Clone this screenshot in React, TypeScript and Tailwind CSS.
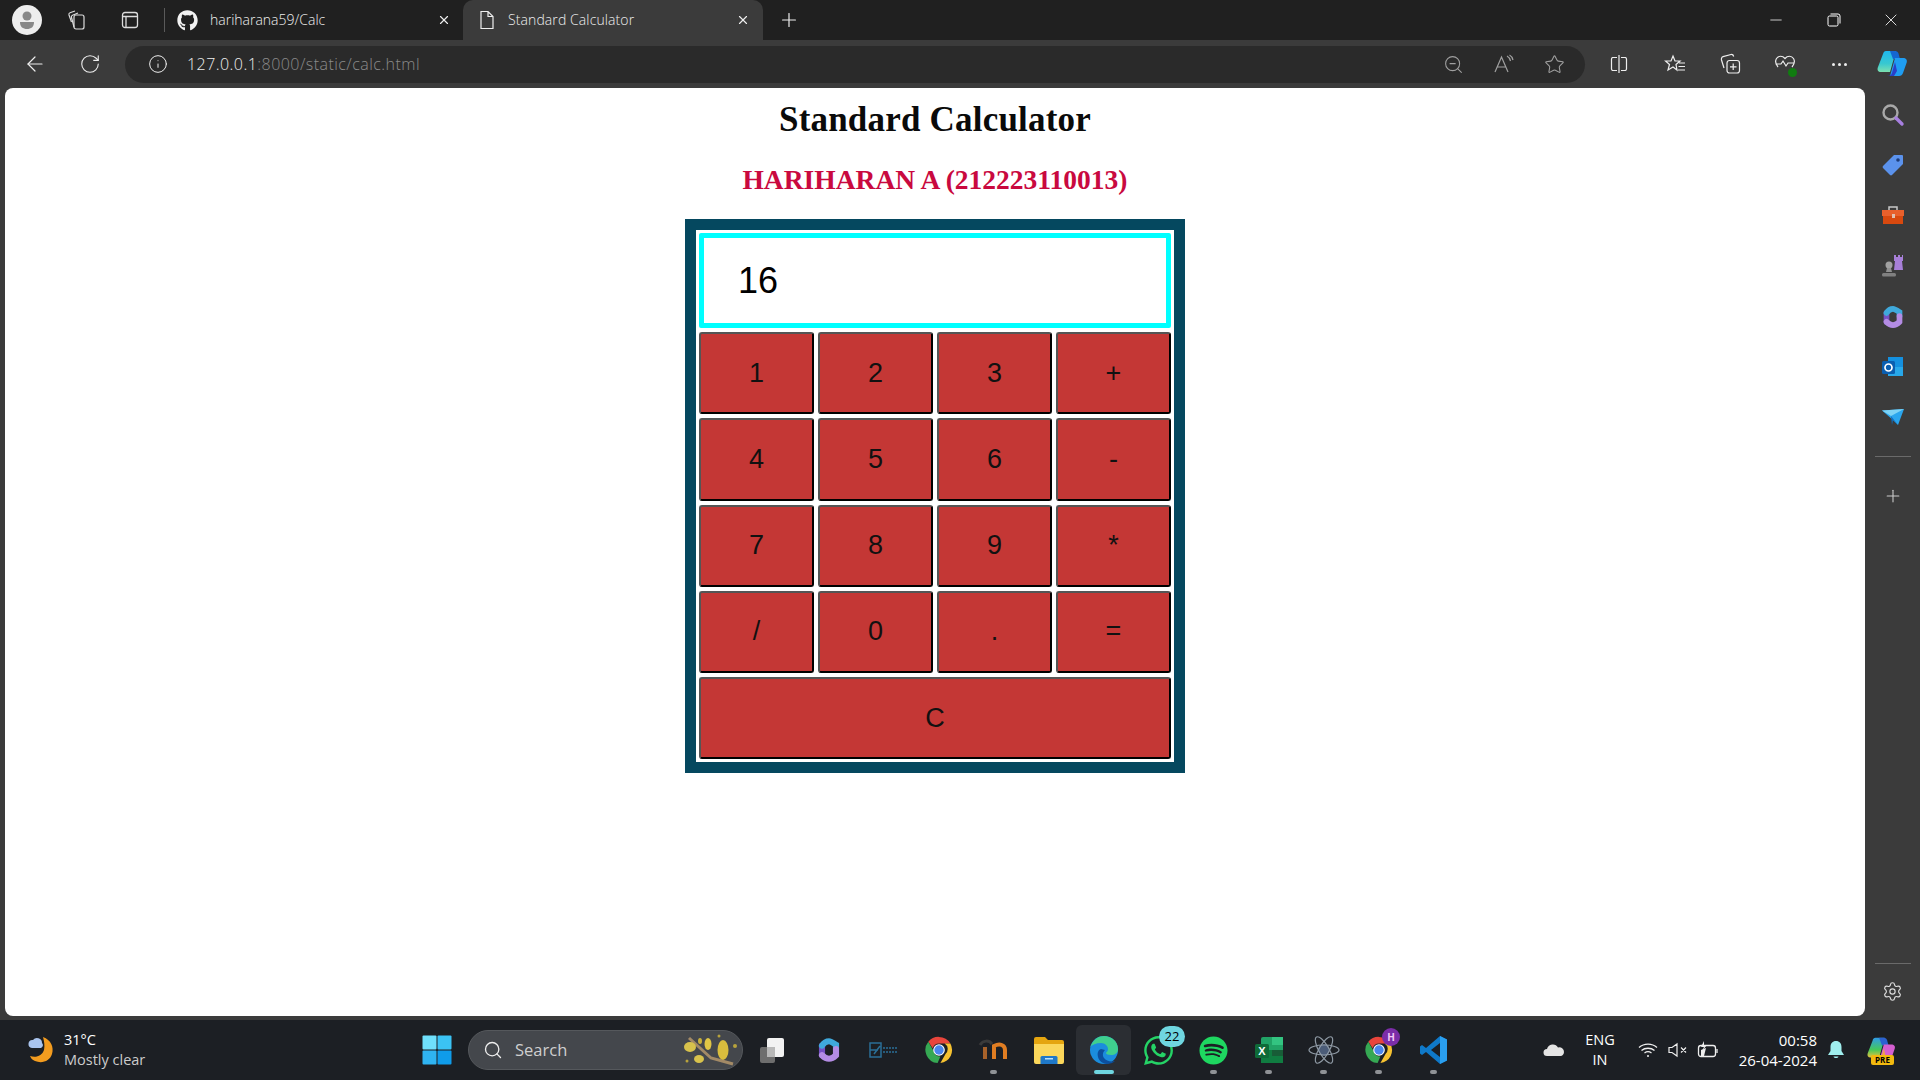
import {
  ArrowLeft,
  Info,
  Minus,
  Plus,
  RotateCw,
  Search,
  Settings,
  Star,
  X,
  ZoomOut,
} from "lucide-react";
import { FaGithub, FaSpotify, FaWhatsapp } from "react-icons/fa";

const keys = ["1", "2", "3", "+", "4", "5", "6", "-", "7", "8", "9", "*", "/", "0", ".", "="];

const keyClass =
  "h-[82.25px] rounded-[3px] border-2 border-t-[#555555] border-l-[#555555] border-r-black border-b-black bg-[#c43735] text-[27px] leading-none text-[#111111] font-['Liberation_Sans',sans-serif]";

function ChromeLogo({ size = 30 }: { size?: number }) {
  return (
    <svg width={size} height={size} viewBox="0 0 32 32">
      <path d="M16 2a14 14 0 0 1 12.1 7H16a7 7 0 0 0-6.7 5L4.6 7.2A14 14 0 0 1 16 2z" fill="#e8453c" />
      <path d="M28.1 9A14 14 0 0 1 17.5 29.9l5.6-9.9A7 7 0 0 0 22 9z" fill="#f6c231" />
      <path d="M4.6 7.2 10.500 17.500A7 7 0 0 0 17.500 22.800L14.500 29.900A14 14 0 0 1 4.600 7.200z" fill="#35a853" />
      <circle cx="16" cy="16" r="6.200" fill="#fff" />
      <circle cx="16" cy="16" r="5" fill="#4a87ee" />
    </svg>
  );
}

function CopilotLogo({ size = 30, pink = false }: { size?: number; pink?: boolean }) {
  const id = pink ? "copilot-pink" : "copilot-blue";
  return (
    <svg width={size} height={size} viewBox="0 0 32 32">
      <defs>
        <linearGradient id={id} x1="0" y1="0" x2="0" y2="1">
          <stop offset="0" stopColor={pink ? "#2f9be8" : "#1fb8ee"} />
          <stop offset="0.6" stopColor={pink ? "#45c85a" : "#38c8d0"} />
          <stop offset="1" stopColor={pink ? "#e8c23c" : "#7ce0b0"} />
        </linearGradient>
      </defs>
      <path d="M10 3h10l-6 21H5c-3 0-4-2-3.200-4.500L7 6c.5-2 1.500-3 3-3z" fill={`url(#${id})`} />
      <path d="M14 3h5c2 0 3 1 3.500 2.500L24 11h-7z" fill={pink ? "#2c62d0" : "#1566d0"} />
      <path d="M19 10h8c3 0 4.500 2 3.700 4.500L27 25c-.7 2-2 3-4 3h-9l5-18z" fill={pink ? "#d55fd0" : "#1f9df2"} />
      <path d="M11 28c3 0 4.500-1 5-3l3-11 2 9-3 5z" fill={pink ? "#f0a050" : "#2a3fc8"} />
    </svg>
  );
}

function M365Logo({ size = 28 }: { size?: number }) {
  return (
    <svg width={size} height={size} viewBox="0 0 32 32" fill="none" strokeWidth="7" strokeLinecap="round">
      <path d="M8 22V11" stroke="#7650c4" />
      <path d="M8 11c2-3 5-5 8-5 2 0 5 2 8 4v5" stroke="#3fa9dc" />
      <path d="M24 15v7c-2 2-5 4-8 4-3 0-6-2-8-4" stroke="#b48ce4" />
    </svg>
  );
}

function EdgeLogo() {
  return (
    <svg width="32" height="32" viewBox="0 0 32 32">
      <circle cx="16" cy="16" r="14" fill="#1b8ddd" />
      <path d="M2.500 13C5 5 11 2 16 2c7 0 14 5 14 13 0 4-3 6-7 6-3 0-5-1-5-2 0-1 2-1 2-4 0-3-3-6-7-6-5 0-9 2-11 4z" fill="#3fcf8e" />
      <path d="M13 15c-3 1-4 4-3 8 1 4 5 7 9 7 3 0 6-1 8-3-4 1-9 0-11-3-2-3-1-6 1-8z" fill="#0c4f9e" />
    </svg>
  );
}

function Slot({ children, dot, active }: { children: React.ReactNode; dot?: boolean; active?: boolean }) {
  return (
    <div className={`relative flex h-[50px] w-[55px] items-center justify-center rounded-md ${active ? "bg-[#2b2e33]" : ""}`}>
      {children}
      {dot && <span className="absolute bottom-[1px] h-[4px] w-[7px] rounded-full bg-[#8f9296]" />}
      {active && <span className="absolute bottom-[1px] h-[4px] w-[20px] rounded-full bg-[#6fd6e0]" />}
    </div>
  );
}

function TopBar() {
  return (
    <div className="flex h-10 items-center bg-[#202020] text-white font-['Open_Sans',sans-serif]">
      <div className="ml-[12px] flex h-[30px] w-[30px] items-center justify-center overflow-hidden rounded-full bg-[#eeeeee]">
        <svg width="20" height="24" viewBox="0 0 20 24">
          <circle cx="10" cy="8" r="4.500" fill="#888" />
          <path d="M3 14h14c0 5-3 7-7 7s-7-2-7-7z" fill="#888" />
        </svg>
      </div>
      <svg className="ml-[24px]" width="22" height="22" viewBox="0 0 22 22" fill="none" stroke="#dddddd" strokeWidth="1.200">
        <rect x="8" y="6" width="10" height="14" rx="2" />
        <path d="M8 18 5.500 8.500c-.3-1 .2-2 1-2.300L12 4" />
        <path d="M5.500 13 3 6c-.3-1 .2-2 1-2.300L9 2" />
      </svg>
      <svg className="ml-[32px]" width="20" height="20" viewBox="0 0 20 20" fill="none" stroke="#dddddd" strokeWidth="1.300">
        <rect x="2.500" y="2.500" width="15" height="15" rx="2.500" />
        <path d="M2.500 6.500h15M6 6.500v11" />
      </svg>
      <div className="ml-[24px] h-6 w-px bg-[#5a5a5a]" />
      <FaGithub className="ml-[12px] shrink-0 text-[#f2f2f2]" size={21} />
      <span className="ml-[12px] w-[227px] pb-[2px] text-[14px] font-light text-[#eeeeee]">hariharana59/Calc</span>
      <X size={14} className="text-[#eeeeee]" />
      <div className="ml-[12px] flex h-10 w-[300px] items-center rounded-t-[10px] bg-[#3b3b3b]">
        <svg className="ml-[15px]" width="18" height="20" viewBox="0 0 18 20" fill="none" stroke="#eeeeee" strokeWidth="1.200">
          <path d="M3 1.500h7l5 5v12H3zM10 1.500v5h5" />
        </svg>
        <span className="ml-[12px] w-[228px] pb-[2px] text-[14px] font-light tracking-[0.1px] text-[#eeeeee]">Standard Calculator</span>
        <X size={14} className="text-[#eeeeee]" />
      </div>
      <Plus size={22} strokeWidth={1.300} className="ml-[15px] text-[#eeeeee]" />
      <div className="ml-auto flex items-center">
        <Minus size={18} strokeWidth={1} className="mr-[42px]" />
        <svg className="mr-[40px]" width="14" height="14" viewBox="0 0 14 14" fill="none" stroke="#ffffff" strokeWidth="1">
          <rect x="1" y="3" width="10" height="10" rx="1.500" />
          <path d="M3.500 1h7.500a2 2 0 0 1 2 2v7.500" />
        </svg>
        <X size={20} strokeWidth={1} className="mr-[19px]" />
      </div>
    </div>
  );
}

function Toolbar() {
  return (
    <div className="flex h-12 items-center bg-[#3b3b3b] text-[#eeeeee]">
      <ArrowLeft size={24} strokeWidth={1.200} className="ml-[23px]" />
      <RotateCw size={22} strokeWidth={1.200} className="ml-[32px]" />
      <div className="ml-[24px] flex h-[37px] w-[1460px] items-center rounded-full bg-[#2a2a2a]">
        <Info size={20} strokeWidth={1.200} className="ml-[23px]" />
        <span className="ml-[19px] text-[16px] font-light tracking-[0.45px] font-['Open_Sans',sans-serif]">
          127.0.0.1<span className="text-[#8a8a8a]">:8000/static/calc.html</span>
        </span>
        <ZoomOut size={21} strokeWidth={1.200} className="ml-auto text-[#a0a0a0]" />
        <svg className="ml-[30px]" width="20" height="20" viewBox="0 0 20 20" fill="none" stroke="#a0a0a0" strokeWidth="1.200">
          <path d="M1 18 7.500 3l6.500 15M3.500 13h8M13 2c2 1 3 3 3.500 5M15.500 1c2 1 3 3 3.500 5" />
        </svg>
        <Star size={21} strokeWidth={1.200} className="ml-[30px] mr-[20px] text-[#a0a0a0]" />
      </div>
      <svg className="ml-[24px]" width="20" height="20" viewBox="0 0 20 20" fill="none" stroke="#eeeeee" strokeWidth="1.200">
        <path d="M8 3.500H3.500a2 2 0 0 0-1 1.500v10a2 2 0 0 0 1 1.500H8M12 3.500h4.500a2 2 0 0 1 1 1.500v10a2 2 0 0 1-1 1.500H12M10 1v18" />
      </svg>
      <svg className="ml-[35px]" width="22" height="22" viewBox="0 0 22 22" fill="none" stroke="#eeeeee" strokeWidth="1.200">
        <path d="m9 3 2 5h5l-4 3.500 1 5.500-4-3-5 3 1.500-5.500L1.500 8h5.500zM15 10h6M14.500 13.500H21M14 17h7" />
      </svg>
      <svg className="ml-[33px]" width="22" height="22" viewBox="0 0 22 22" fill="none" stroke="#eeeeee" strokeWidth="1.200">
        <path d="M5 15 2.500 7c-.4-1.500.3-3 1.500-3.300L12 1.500c1.200-.2 2.300.5 2.700 2" />
        <rect x="8" y="7.500" width="12.500" height="12.500" rx="2.500" />
        <path d="M14.200 10.500v6.500M11 13.800h6.500" />
      </svg>
      <div className="relative ml-[33px] h-[22px] w-[22px]">
        <svg width="22" height="22" viewBox="0 0 22 22" fill="none" stroke="#eeeeee" strokeWidth="1.200">
          <path d="M4 14C1.500 11 1 8 2.500 5.500 4.500 2.500 8.500 2.500 11 5.500c2.500-3 6.500-3 8.500 0 1.500 2.500 1 5.500-1.500 8.500M1.500 11H7l2-3 3 5 2-3h6.500" />
        </svg>
        <span className="absolute right-[-1px] bottom-[-2px] h-[9px] w-[9px] rounded-full bg-[#107c10]" />
      </div>
      <div className="ml-[36px] flex gap-[3px]">
        <span className="h-[3px] w-[3px] rounded-full bg-[#eeeeee]" />
        <span className="h-[3px] w-[3px] rounded-full bg-[#eeeeee]" />
        <span className="h-[3px] w-[3px] rounded-full bg-[#eeeeee]" />
      </div>
      <div className="ml-[29px]">
        <CopilotLogo size={32} />
      </div>
    </div>
  );
}

function Calculator() {
  return (
    <div className="mt-[23px] w-[500px] border-[11px] border-[#05485f] bg-white p-[3px]">
      <input
        readOnly
        value="16"
        className="mb-[4px] block h-[95px] w-full rounded-[2px] border-[5px] border-[#00ffff] bg-white px-[34px] text-[36px] text-black outline-none font-['Liberation_Sans',sans-serif]"
      />
      <div className="grid grid-cols-4 gap-x-[4px] gap-y-[4px]">
        {keys.map((key) => (
          <button key={key} className={keyClass}>
            {key}
          </button>
        ))}
        <button className={`${keyClass} col-span-4`}>C</button>
      </div>
    </div>
  );
}

function Sidebar() {
  return (
    <div className="flex w-[55px] flex-col items-center bg-[#3b3b3b] pt-[14px]">
      <div className="flex flex-col items-center gap-[24.4px]">
        <svg width="26" height="26" viewBox="0 0 26 26" fill="none">
          <circle cx="10.500" cy="10.500" r="7" stroke="#a8a8a8" strokeWidth="2.400" />
          <path d="m16 16 6 6" stroke="#a77fe0" strokeWidth="3.400" strokeLinecap="round" />
        </svg>
        <svg width="26" height="26" viewBox="0 0 26 26">
          <path d="M14 3h8a1 1 0 0 1 1 1v8L12 23a1.500 1.500 0 0 1-2 0l-7-7a1.500 1.500 0 0 1 0-2z" fill="#5b92ec" />
          <circle cx="18" cy="8" r="1.800" fill="#1d3c78" />
        </svg>
        <svg width="26" height="26" viewBox="0 0 26 26">
          <path d="M9 7V4h8v3" fill="none" stroke="#c8c8c8" strokeWidth="1.500" />
          <rect x="2" y="7" width="22" height="6" fill="#e8602c" />
          <rect x="3" y="13" width="20" height="8" fill="#d8490f" />
          <rect x="12" y="11" width="3" height="4" fill="#e0c0b0" />
        </svg>
        <svg width="26" height="26" viewBox="0 0 26 26">
          <circle cx="9" cy="12" r="3.500" fill="#a0a0a0" />
          <path d="M7 15h4l1 4H6z" fill="#909090" />
          <rect x="2" y="20" width="14" height="3.500" rx="1.500" fill="#808080" />
          <path d="M14 2h2v2h2V2h2v2h2V2h1v6h-1l1 9h-9l1-9h-1z" fill="#a77fd8" />
        </svg>
        <M365Logo size={26} />
        <svg width="26" height="26" viewBox="0 0 26 26">
          <path d="M8 3h15v18H8z" fill="#1490df" />
          <path d="M8 13h15v9H8z" fill="#28a8ea" />
          <rect x="2" y="7" width="13" height="13" rx="1.500" fill="#0a5eb0" />
          <circle cx="8.500" cy="13.500" r="3.500" fill="none" stroke="#fff" strokeWidth="1.700" />
        </svg>
        <svg width="26" height="26" viewBox="0 0 26 26">
          <path d="M2 6.500 24 5 18 21l-5-5z" fill="#2aa6ee" />
          <path d="M2 6.500 24 5l-13 7z" fill="#7dd3f5" />
          <path d="m11 12 7 9-5-5-1 5z" fill="#0f6cbd" />
        </svg>
      </div>
      <div className="mt-[26px] h-px w-[36px] bg-[#6a6a6a]" />
      <Plus size={20} strokeWidth={1.300} className="mt-[29px] text-[#cccccc]" />
      <div className="mt-auto h-px w-[36px] bg-[#6a6a6a]" />
      <Settings size={21} strokeWidth={1.300} className="mb-[18px] mt-[17px] text-[#dddddd]" />
    </div>
  );
}

function Taskbar() {
  return (
    <div className="flex h-[60px] items-center bg-[#1c1f24] text-white font-['Open_Sans',sans-serif]">
      <svg className="ml-[24px]" width="32" height="32" viewBox="0 0 32 32">
        <path d="M19 3c8 3 11 10 9 17-2 7-10 10-17 7-3-1-4-3-5-5 6 2 12 0 14-6 1-5 0-9-1-13z" fill="#f39c1f" />
        <path d="M8 14a4 4 0 0 1 1-8 5 5 0 0 1 9 3 3 3 0 0 1-1 5z" fill="#a9c4ee" />
      </svg>
      <div className="ml-[8px] flex w-[358px] flex-col text-[14.5px] leading-[20px]">
        <span>31°C</span>
        <span className="text-[#cccccc]">Mostly clear</span>
      </div>
      <svg width="30" height="30" viewBox="0 0 30 30">
        <rect x="0.500" y="0.500" width="14" height="14" rx="1" fill="#6fe0fb" />
        <rect x="15.500" y="0.500" width="14" height="14" rx="1" fill="#3bc3f4" />
        <rect x="0.500" y="15.500" width="14" height="14" rx="1" fill="#2fb4f2" />
        <rect x="15.500" y="15.500" width="14" height="14" rx="1" fill="#0f9cea" />
      </svg>
      <div className="ml-[16px] flex h-10 w-[275px] items-center rounded-full border border-[#55585c] bg-[#44474c]">
        <Search size={20} strokeWidth={1.600} className="ml-[14px] text-[#eeeeee]" />
        <span className="ml-[12px] text-[16.5px] text-[#cfcfcf]">Search</span>
        <svg className="ml-auto mr-[1px]" width="60" height="36" viewBox="0 0 60 36">
          <path d="M8 6 30 26l22 6" stroke="#a38a66" strokeWidth="3" fill="none" />
          <ellipse cx="9" cy="15" rx="6" ry="5" fill="#d8c24c" />
          <ellipse cx="19" cy="9" rx="2" ry="3" fill="#c8b03c" />
          <ellipse cx="27" cy="12" rx="3.500" ry="6" fill="#dfc545" />
          <ellipse cx="42" cy="18" rx="5.500" ry="10" fill="#d9bd3d" />
          <ellipse cx="18" cy="27" rx="5" ry="4" fill="#d8c24c" />
          <circle cx="54" cy="14" r="2" fill="#b8a23c" />
          <circle cx="38" cy="4" r="1.500" fill="#b8a23c" />
          <circle cx="6" cy="29" r="1.500" fill="#b8a23c" />
        </svg>
      </div>
      <div className="ml-[3px] flex items-center">
        <Slot>
          <svg width="30" height="30" viewBox="0 0 30 30">
            <rect x="1" y="12" width="15" height="16" rx="2" fill="#6e6e6e" />
            <rect x="8" y="3" width="17" height="19" rx="2" fill="#f2f2f2" />
            <rect x="8" y="12" width="8" height="10" fill="#b8b8b8" />
          </svg>
        </Slot>
        <Slot><M365Logo /></Slot>
        <Slot>
          <svg width="30" height="16" viewBox="0 0 30 16" fill="none" stroke="#2a6f96" strokeWidth="1.500">
            <path d="M1 1h11v14H1zM1 8h8M5 12l6-8" />
            <path d="M14 6h14M14 10h14" strokeDasharray="2 1" />
          </svg>
        </Slot>
        <Slot><ChromeLogo /></Slot>
        <Slot dot>
          <svg width="32" height="26" viewBox="0 0 32 26" fill="none">
            <path d="M7 10v12" stroke="#a8622a" strokeWidth="4" />
            <path d="M16 22V9c6-3 11-1 11 4v9" stroke="#e07d22" strokeWidth="4" />
            <path d="M2 8c3-5 9-5 12-1" stroke="#3a3a3a" strokeWidth="3" />
          </svg>
        </Slot>
        <Slot>
          <svg width="30" height="28" viewBox="0 0 30 28">
            <path d="M0 3a2 2 0 0 1 2-2h9l3 3h14a2 2 0 0 1 2 2v4H0z" fill="#e5a50f" />
            <path d="M0 8h30v18a2 2 0 0 1-2 2H2a2 2 0 0 1-2-2z" fill="#fbd75b" />
            <path d="M8 20h14a1.500 1.500 0 0 1 1.500 1.500V28H6.500v-6.500A1.500 1.500 0 0 1 8 20z" fill="#1f78c8" />
            <rect x="11" y="22" width="8" height="1.500" fill="#bde0f8" />
          </svg>
        </Slot>
        <Slot active><EdgeLogo /></Slot>
        <Slot>
          <FaWhatsapp size={33} className="text-[#25d366]" />
          <span className="absolute right-[1px] top-[1px] flex h-[21px] w-[26px] items-center justify-center rounded-full bg-[#6fd6e0] text-[13px] text-black">22</span>
        </Slot>
        <Slot dot><FaSpotify size={29} className="text-[#1ed760]" /></Slot>
        <Slot dot>
          <svg width="30" height="28" viewBox="0 0 30 28">
            <rect x="7" y="1" width="22" height="26" rx="2" fill="#21a366" />
            <rect x="18" y="1" width="11" height="8" fill="#33c481" />
            <rect x="7" y="14" width="22" height="13" fill="#107c41" />
            <rect x="18" y="14" width="11" height="6" fill="#185c37" />
            <rect x="1" y="8" width="14" height="14" rx="1.500" fill="#0f6a38" />
            <text x="8" y="19" textAnchor="middle" fontSize="11" fontWeight="700" fill="#fff" fontFamily="Liberation Sans">X</text>
          </svg>
        </Slot>
        <Slot dot>
          <svg width="32" height="30" viewBox="0 0 32 30" fill="none" stroke="#8f9aa5" strokeWidth="1.200">
            <circle cx="16" cy="15" r="6" fill="#4b5c78" stroke="none" />
            <ellipse cx="16" cy="15" rx="15" ry="5" />
            <ellipse cx="16" cy="15" rx="15" ry="5" transform="rotate(60 16 15)" />
            <ellipse cx="16" cy="15" rx="15" ry="5" transform="rotate(120 16 15)" />
          </svg>
        </Slot>
        <Slot dot>
          <ChromeLogo />
          <span className="absolute right-[6px] top-[3px] flex h-[18px] w-[18px] items-center justify-center rounded-full bg-[#7b2da8] text-[10px] font-bold text-[#f2c8f5]">H</span>
        </Slot>
        <Slot dot>
          <svg width="30" height="30" viewBox="0 0 30 30">
            <path d="M21 1 28 4.500v21L21 29 7 17l-4 3-2-1.500V11.500L3 10l4 3z" fill="#0f79c9" />
            <path d="M21 8 12 15l9 7z" fill="#1c1f24" />
            <path d="M21 1 28 4.500v21L21 29z" fill="#2a9ff0" />
          </svg>
        </Slot>
      </div>
      <svg className="ml-[82px]" width="22" height="14" viewBox="0 0 22 14">
        <path d="M4 13a3.500 3.500 0 0 1 0-7 6 6 0 0 1 11-1.500A4.500 4.500 0 0 1 21 9c0 2-1.500 4-3.500 4z" fill="#e4e4e4" />
      </svg>
      <div className="ml-[5px] flex w-[60px] flex-col items-center text-[14.5px] leading-[20px]">
        <span>ENG</span>
        <span>IN</span>
      </div>
      <svg className="ml-[8px]" width="20" height="16" viewBox="0 0 20 16" fill="none" stroke="#eeeeee" strokeWidth="1.300">
        <path d="M1 5.500c5-4.500 13-4.500 18 0M3.500 8.500c3.500-3 9.500-3 13 0M6.500 11c2-1.500 5-1.500 7 0" />
        <circle cx="10" cy="14" r="1" fill="#eeeeee" stroke="none" />
      </svg>
      <svg className="ml-[10px]" width="20" height="16" viewBox="0 0 20 16" fill="none" stroke="#eeeeee" strokeWidth="1.200">
        <path d="M1 5.500h3L9 2v12l-5-3.500H1zM13 5.500l5 5M18 5.500l-5 5" />
      </svg>
      <svg className="ml-[9px]" width="22" height="18" viewBox="0 0 22 18" fill="none" stroke="#eeeeee" strokeWidth="1.300">
        <rect x="1.500" y="4.500" width="17" height="11" rx="2.500" />
        <path d="M20 8v4" />
        <path d="M4 15V9l5-2-2 8z" fill="#eeeeee" stroke="none" />
        <path d="M7 0 4 6h3L5 10l5-6H7z" fill="#eeeeee" stroke="none" />
      </svg>
      <div className="ml-auto flex items-center">
        <div className="flex flex-col items-end text-[15px] leading-[20px]">
          <span>00:58</span>
          <span>26-04-2024</span>
        </div>
        <svg className="ml-[10px]" width="18" height="20" viewBox="0 0 18 20">
          <path d="M9 1c3.500 0 5.500 2.500 5.500 6v4l2.500 4H1l2.500-4V7C3.500 3.500 5.500 1 9 1z" fill="#9feeee" />
          <path d="M6.500 16.500h5c-.5 2-4.500 2-5 0z" fill="#9feeee" />
        </svg>
        <div className="relative ml-[21px] mr-[24px] h-[30px] w-[30px]">
          <CopilotLogo size={30} pink />
          <span className="absolute bottom-0 left-[5px] h-[10px] w-[23px] rounded-[2px] bg-[#f2b90f] text-center text-[8px] font-bold leading-[10px] text-black">PRE</span>
        </div>
      </div>
    </div>
  );
}

export default function App() {
  return (
    <div className="flex h-[1080px] w-[1920px] flex-col overflow-hidden bg-[#3b3b3b]">
      <TopBar />
      <Toolbar />
      <div className="flex min-h-0 flex-1">
        <div className="ml-[5px] mb-[4px] flex flex-1 flex-col items-center rounded-[8px] bg-white">
          <h1 className="mt-[12px] text-[35px] font-bold leading-[40px] tracking-[0.2px] text-[#0a0a0a] font-['Liberation_Serif',serif]">
            Standard Calculator
          </h1>
          <h2 className="mt-[24px] text-[27.5px] font-bold leading-[32px] text-[#c9093f] font-['Liberation_Serif',serif]">
            HARIHARAN A (212223110013)
          </h2>
          <Calculator />
        </div>
        <Sidebar />
      </div>
      <Taskbar />
    </div>
  );
}
